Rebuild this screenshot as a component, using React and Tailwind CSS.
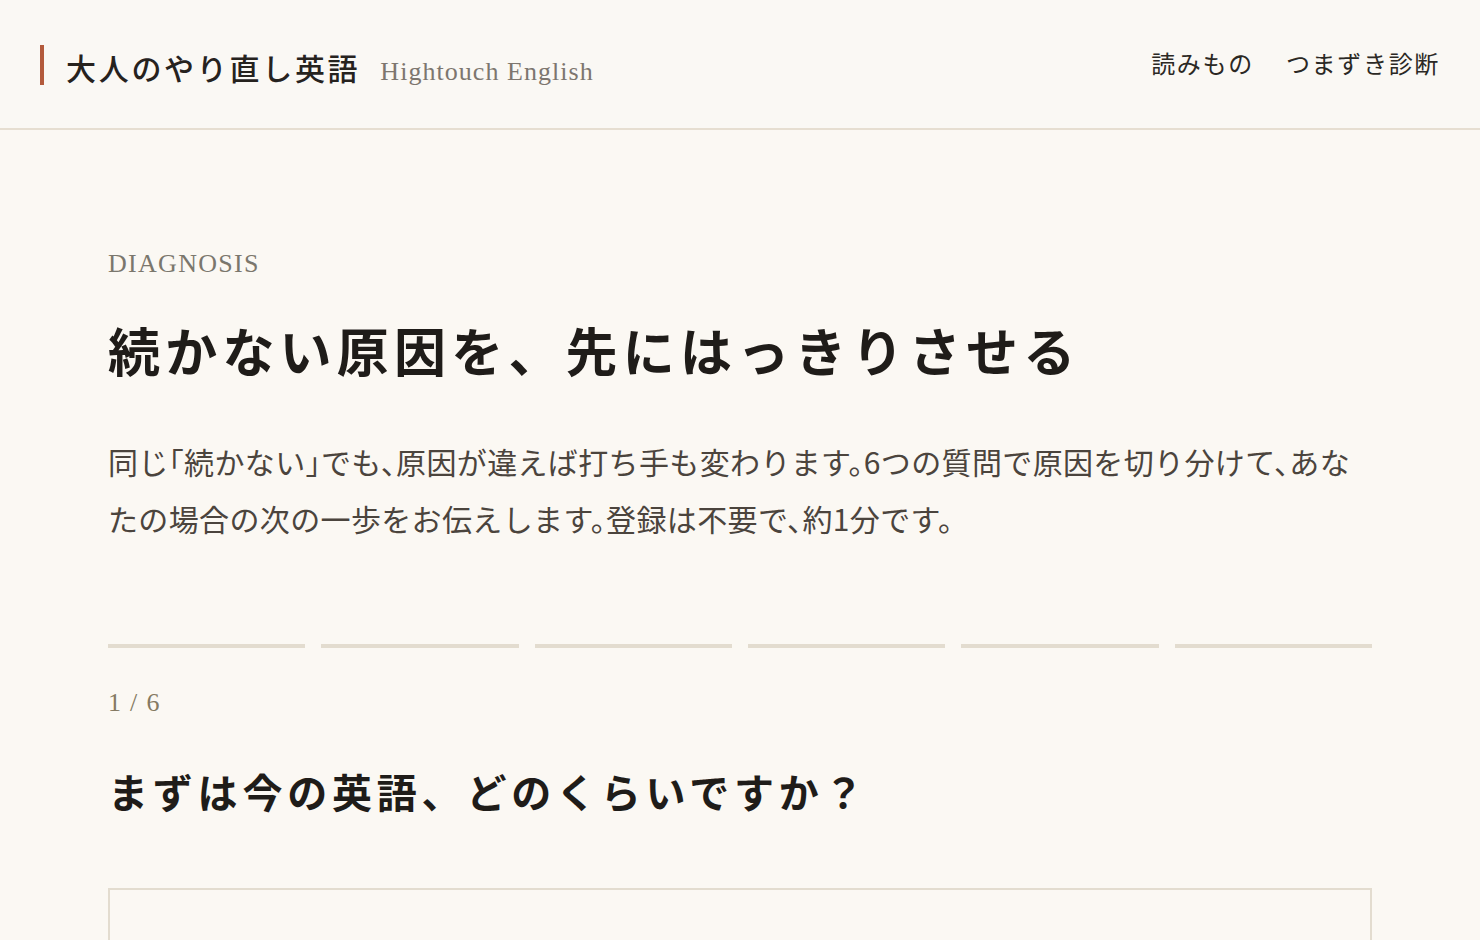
import React from "react";

const sans = "font-['Noto_Sans_CJK_JP','Noto_Sans',sans-serif]";
const serif = "font-['Liberation_Serif','Noto_Sans_CJK_JP',serif]";

export default function App() {
  const segs = [0, 1, 2, 3, 4, 5];
  return (
    <div className={`min-h-[940px] bg-[#fbf8f3] text-[#24201c] ${sans}`}>
      <header className="h-[130px] border-b-2 border-[#e6ded1] bg-[#faf8f4] flex items-center justify-between pl-10 pr-[40px]">
        <div className="flex items-center gap-[22px] mt-[2px]">
          <div className="w-1 h-10 bg-[#b35a3c]" />
          <div className="flex items-baseline gap-[20px] mt-[6px]">
            <span className="text-[30px] leading-none font-medium tracking-[0.09em] text-[#26221e]">
              大人のやり直し英語
            </span>
            <span className={`${serif} text-[26px] leading-none tracking-[0.04em] text-[#7d766f]`}>
              Hightouch English
            </span>
          </div>
        </div>
        <nav className="flex items-center gap-8 text-[24px] tracking-[0.07em] text-[#2b2824] -mt-[2px]">
          <span>読みもの</span>
          <span>つまずき診断</span>
        </nav>
      </header>

      <main className="px-[108px] pt-[114px]">
        <div className={`${serif} text-[26px] leading-[39px] tracking-[0.05em] text-[#7b776d]`}>
          DIAGNOSIS
        </div>
        <h1 className="mt-[31px] text-[52px] leading-[1.4] font-bold tracking-[0.1em] text-[#1f1c19]">
          続かない原因を、先にはっきりさせる
        </h1>
        <p className="mt-[46px] text-[30px] leading-[57px] tracking-[0.012em] text-[#4b443d] [font-feature-settings:'halt']">
          同じ「続かない」でも、原因が違えば打ち手も変わります。6つの質問で原因を切り分けて、あな
          <br />
          たの場合の次の一歩をお伝えします。登録は不要で、約1分です。
        </p>

        <div className="mt-[97px] flex gap-4">
          {segs.map((s) => (
            <div key={s} className="flex-1 h-1 bg-[#e3dccf]" />
          ))}
        </div>

        <div className={`${serif} mt-[35px] text-[26px] leading-[39px] tracking-[0.05em] text-[#857a62]`}>
          1 / 6
        </div>

        <h2 className="mt-[41px] text-[40px] leading-[1.4] font-bold tracking-[0.12em] text-[#1f1c19]">
          まずは今の英語、どのくらいですか？
        </h2>

        <div className="mt-[69px] border-2 border-[#e3dccf] px-[22px] pt-[46px] pb-10">
          <div className="text-[24px] leading-[1.5] text-[#26221e]">ほとんど話せない・読めない</div>
        </div>
      </main>
    </div>
  );
}
